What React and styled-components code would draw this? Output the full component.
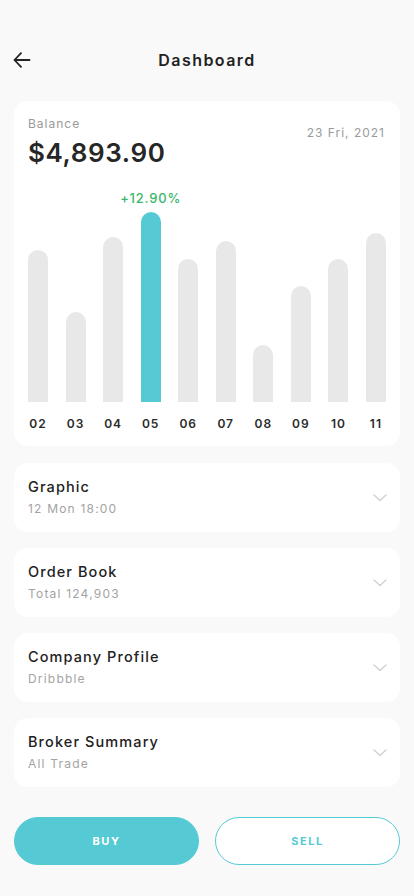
import React from "react";
import styled, { createGlobalStyle } from "styled-components";

const Global = createGlobalStyle`
  * { box-sizing: border-box; }
  body {
    margin: 0;
    background: #f9f9f9;
    font-family: "Inter", "Noto Sans", sans-serif;
    color: #262626;
  }
`;

const Page = styled.div`
  width: 414px;
  min-height: 896px;
  padding: 40px 14px 30px;
  display: flex;
  flex-direction: column;
`;

const Header = styled.header`
  position: relative;
  height: 40px;
  display: flex;
  align-items: center;
  justify-content: center;
`;

const BackButton = styled.button`
  position: absolute;
  left: -1px;
  top: 11px;
  width: 18px;
  height: 18px;
  padding: 0;
  border: 0;
  background: none;
  display: flex;
  align-items: center;
  justify-content: center;
  color: #222;
`;

const Title = styled.h1`
  margin: 0;
  font-size: 16px;
  font-weight: 600;
  letter-spacing: 1.45px;
  color: #222;
`;

const Card = styled.section`
  background: #fff;
  border-radius: 14px;
`;

const BalanceCard = styled(Card)`
  margin-top: 21px;
  padding: 15px 14px 14px;
`;

const TopRow = styled.div`
  display: flex;
  justify-content: space-between;
  align-items: flex-start;
`;

const Label = styled.div`
  font-size: 12px;
  line-height: 16px;
  letter-spacing: 1px;
  color: #9a9a9a;
`;

const DateText = styled(Label)`
  margin-top: 9px;
  margin-right: 1px;
`;

const Amount = styled.div`
  margin-top: 5px;
  font-size: 26px;
  line-height: 32px;
  font-weight: 600;
  letter-spacing: 0.6px;
  color: #262626;
`;

const Chart = styled.div`
  height: 233px;
  display: flex;
  justify-content: space-between;
  align-items: flex-end;
`;

const Column = styled.div`
  width: 20px;
  display: flex;
  flex-direction: column;
  align-items: center;
`;

const Change = styled.div`
  white-space: nowrap;
  font-size: 13px;
  line-height: 16px;
  font-weight: 500;
  letter-spacing: 0.8px;
  color: #3bb66a;
  margin-bottom: 6px;
`;

const Bar = styled.div`
  width: 20px;
  border-radius: 10px 10px 0 0;
  background: ${(p) => (p.$active ? "#56cad4" : "#e8e8e8")};
`;

const Days = styled.div`
  margin-top: 14px;
  display: flex;
  justify-content: space-between;
`;

const Day = styled.div`
  width: 20px;
  display: flex;
  justify-content: center;
  white-space: nowrap;
  font-size: 12px;
  line-height: 16px;
  font-weight: 600;
  letter-spacing: 1px;
  color: #2b2b2b;
`;

const List = styled.div`
  margin-top: 17px;
  display: flex;
  flex-direction: column;
  gap: 16px;
`;

const Item = styled(Card)`
  height: 69px;
  padding: 14px 13px 0 14px;
  display: flex;
  align-items: flex-start;
  justify-content: space-between;
`;

const ItemText = styled.div`
  display: flex;
  flex-direction: column;
`;

const ItemTitle = styled.div`
  font-size: 14.5px;
  line-height: 20px;
  font-weight: 500;
  letter-spacing: 1.1px;
  color: #222;
`;

const ItemSub = styled.div`
  margin-top: 4px;
  font-size: 12px;
  line-height: 16px;
  letter-spacing: 1.2px;
  color: #a3a3a3;
`;

const Chevron = styled.svg`
  margin-top: 17px;
  flex: none;
`;

const Actions = styled.div`
  margin-top: 30px;
  display: flex;
  gap: 16px;
`;

const ActionButton = styled.button`
  flex: 1;
  height: 48px;
  border-radius: 24px;
  border: 1px solid #56cad4;
  background: ${(p) => (p.$filled ? "#56cad4" : "#fff")};
  color: ${(p) => (p.$filled ? "#fff" : "#56cad4")};
  font-family: inherit;
  font-size: 11px;
  font-weight: 700;
  letter-spacing: 1.6px;
`;

const bars = [
  { d: "02", h: 152 },
  { d: "03", h: 90 },
  { d: "04", h: 165 },
  { d: "05", h: 190, active: true },
  { d: "06", h: 143 },
  { d: "07", h: 161 },
  { d: "08", h: 57 },
  { d: "09", h: 116 },
  { d: "10", h: 143 },
  { d: "11", h: 169 },
];

const items = [
  { t: "Graphic", s: "12 Mon 18:00" },
  { t: "Order Book", s: "Total 124,903" },
  { t: "Company Profile", s: "Dribbble" },
  { t: "Broker Summary", s: "All Trade" },
];

export default function App() {
  return (
    <>
      <Global />
      <Page>
        <Header>
          <BackButton aria-label="Back">
            <svg width="18" height="16" viewBox="0 0 18 16" fill="none">
              <path
                d="M16.5 8H1.5M8 1.2L1.5 8l6.5 6.8"
                stroke="#222"
                strokeWidth="1.8"
                strokeLinecap="round"
                strokeLinejoin="round"
              />
            </svg>
          </BackButton>
          <Title>Dashboard</Title>
        </Header>

        <BalanceCard>
          <TopRow>
            <div>
              <Label>Balance</Label>
              <Amount>$4,893.90</Amount>
            </div>
            <DateText>23 Fri, 2021</DateText>
          </TopRow>
          <Chart>
            {bars.map((b) => (
              <Column key={b.d}>
                {b.active && <Change>+12.90%</Change>}
                <Bar $active={b.active} style={{ height: b.h }} />
              </Column>
            ))}
          </Chart>
          <Days>
            {bars.map((b) => (
              <Day key={b.d}>{b.d}</Day>
            ))}
          </Days>
        </BalanceCard>

        <List>
          {items.map((it) => (
            <Item key={it.t}>
              <ItemText>
                <ItemTitle>{it.t}</ItemTitle>
                <ItemSub>{it.s}</ItemSub>
              </ItemText>
              <Chevron width="14" height="8" viewBox="0 0 14 8" fill="none">
                <path
                  d="M1 1l6 5.5L13 1"
                  stroke="#cfcfcf"
                  strokeWidth="1.3"
                  strokeLinecap="round"
                  strokeLinejoin="round"
                />
              </Chevron>
            </Item>
          ))}
        </List>

        <Actions>
          <ActionButton $filled>BUY</ActionButton>
          <ActionButton>SELL</ActionButton>
        </Actions>
      </Page>
    </>
  );
}
